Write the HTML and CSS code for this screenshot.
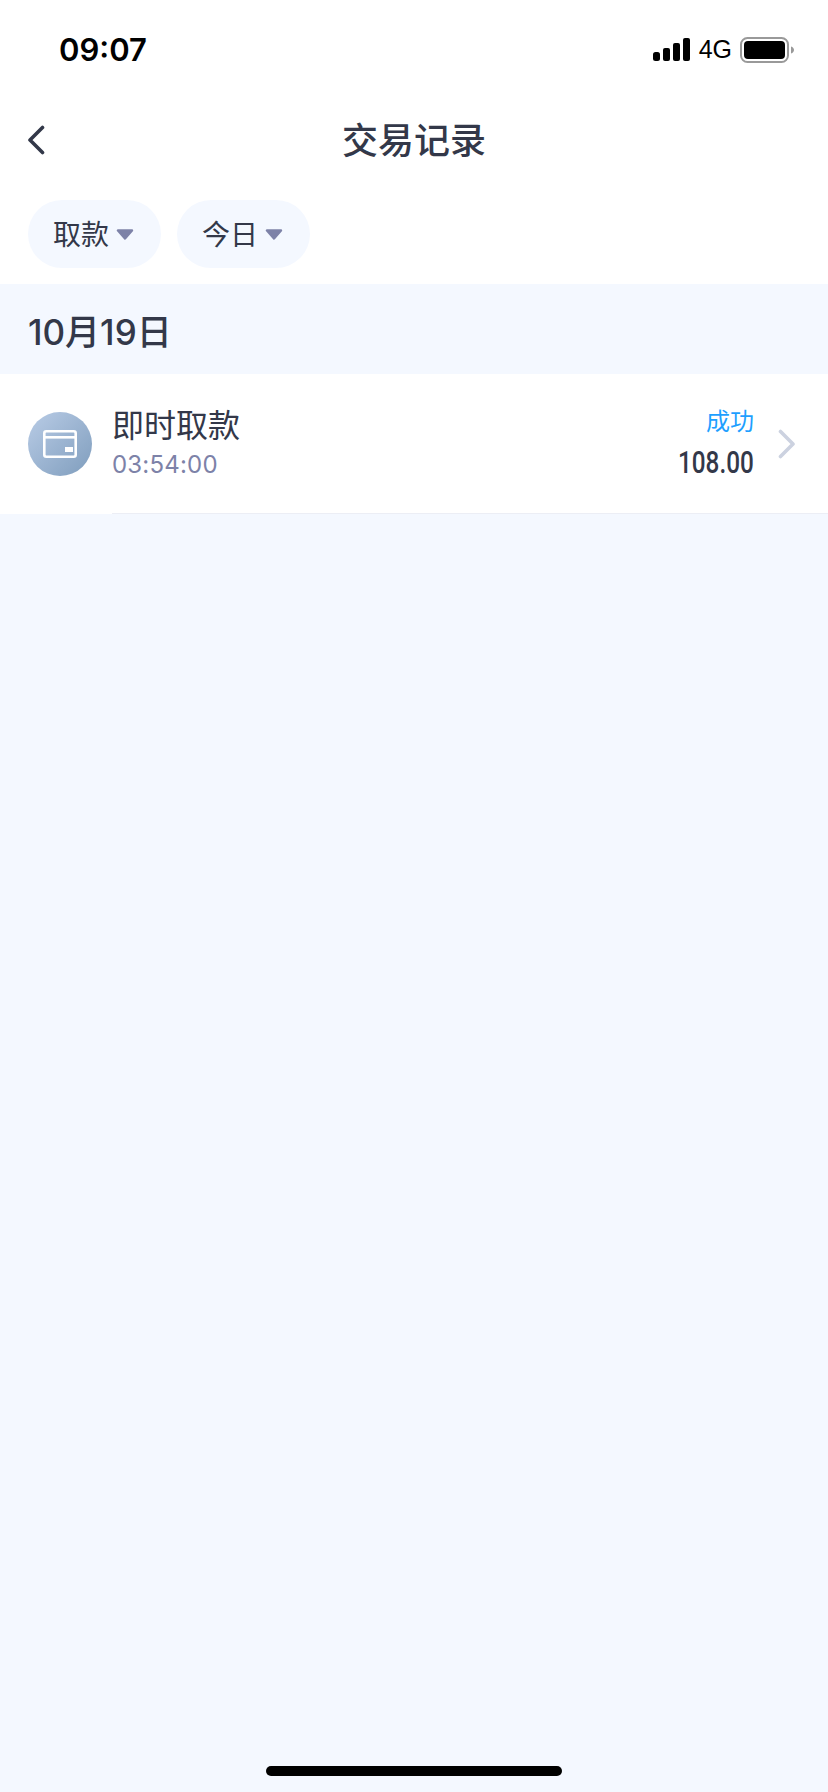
FILE: index.html
```html
<!DOCTYPE html>
<html lang="zh-CN">
<head>
	<meta charset="UTF-8">
	<meta name="viewport" content="width=device-width">
	<title>交易记录</title>
	<link rel="stylesheet" href="styles.css">
</head>
<body>
<div class="page">
	<div class="top">
		<div class="status">
			<span class="clock">09:07</span>
			<div class="status-right">
				<svg class="signal" width="37" height="23" viewBox="0 0 37 23">
					<rect x="0" y="14" width="7" height="9" rx="2.5" fill="#000"/>
					<rect x="10" y="10" width="7" height="13" rx="2" fill="#000"/>
					<rect x="20" y="5" width="7" height="18" rx="2" fill="#000"/>
					<rect x="30" y="0" width="7" height="23" rx="2" fill="#000"/>
				</svg>
				<span class="net">4G</span>
				<svg class="battery" width="54" height="26" viewBox="0 0 54 26">
					<rect x="1" y="1" width="47" height="24" rx="6.5" fill="none" stroke="#999" stroke-width="2"/>
					<rect x="4" y="4" width="41" height="18" rx="4" fill="#000"/>
					<path d="M51 9.5c2 .6 3 2 3 3.500s-1 2.900-3 3.500z" fill="#999"/>
				</svg>
			</div>
		</div>
		<div class="nav">
			<svg class="back" width="18" height="30" viewBox="0 0 18 30">
				<path d="M15.500 2.500L3 15l12.500 12.500" fill="none" stroke="#333849" stroke-width="3.600" stroke-linecap="round" stroke-linejoin="round"/>
			</svg>
			<h1 class="title">交易记录</h1>
		</div>
		<div class="filters">
			<div class="pill"><span class="pill-text">取款</span><svg class="caret" width="18" height="11" viewBox="0 0 18 11"><path d="M2 1.500h14L9 9.500z" fill="#7d82a8" stroke="#7d82a8" stroke-width="2.400" stroke-linejoin="round"/></svg></div>
			<div class="pill"><span class="pill-text">今日</span><svg class="caret" width="18" height="11" viewBox="0 0 18 11"><path d="M2 1.500h14L9 9.500z" fill="#7d82a8" stroke="#7d82a8" stroke-width="2.400" stroke-linejoin="round"/></svg></div>
		</div>
	</div>

	<div class="date">10月19日</div>

	<div class="row">
		<div class="avatar">
			<svg width="34" height="28" viewBox="0 0 34 28">
				<rect x="1.300" y="1.300" width="31.400" height="25.400" rx="2" fill="none" stroke="#fff" stroke-width="2.600"/>
				<rect x="1" y="6" width="32" height="2.600" fill="#fff"/>
				<rect x="22" y="17" width="8" height="5" fill="#fff"/>
			</svg>
		</div>
		<div class="row-main">
			<div class="row-name">即时取款</div>
			<div class="row-time">03:54:00</div>
		</div>
		<div class="row-side">
			<div class="row-state">成功</div>
			<div class="row-amount">108.00</div>
		</div>
		<svg class="more" width="18" height="30" viewBox="0 0 18 30">
			<path d="M2.500 2.500L15 15 2.500 27.500" fill="none" stroke="#ccd2e0" stroke-width="3.600" stroke-linecap="round" stroke-linejoin="round"/>
		</svg>
	</div>

	<div class="home-bar"></div>
</div>
</body>
</html>
```

FILE: styles.css
```css
html { height: 100%; }

body {
	margin: 0;
	height: 100%;
	font-family: "Noto Sans CJK SC", "Liberation Sans", sans-serif;
	color: #333849;
	background-color: #f4f8ff;
}

.page {
	display: flex;
	flex-direction: column;
	height: 100%;
}

.top {
	background-color: #fff;
	padding-bottom: 16px;
}

.status {
	display: flex;
	justify-content: space-between;
	align-items: center;
	height: 99px;
	padding: 0 34px 0 59px;
	box-sizing: border-box;
}

.clock {
	font-family: Inter, "Liberation Sans", sans-serif;
	font-size: 31px;
	font-weight: 600;
	color: #000;
}

.status-right {
	display: flex;
	align-items: center;
}

.net {
	font-family: "Liberation Sans", sans-serif;
	font-size: 25px;
	color: #000;
	margin: 0 8px 0 9px;
}

.nav {
	display: flex;
	align-items: center;
	justify-content: center;
	position: relative;
	height: 80px;
}

.back {
	position: absolute;
	left: 27px;
	top: 26px;
}

.title {
	margin: 0 0 2px;
	font-size: 36px;
	font-weight: 500;
}

.filters {
	display: flex;
	gap: 16px;
	padding: 21px 28px 0;
}

.pill {
	display: flex;
	align-items: center;
	height: 68px;
	padding: 0 27px 0 25px;
	border-radius: 34px;
	background-color: #f4f8ff;
	font-size: 28px;
}

.pill-text { margin-bottom: 2px; }

.caret {
	margin-left: 7px;
}

.date {
	display: flex;
	align-items: center;
	height: 90px;
	padding-left: 28px;
	font-family: Inter, "Noto Sans CJK SC", sans-serif;
	font-size: 35px;
	font-weight: 500;
}

.row {
	display: flex;
	align-items: center;
	height: 140px;
	padding: 0 32px 0 28px;
	background-color: #fff;
	position: relative;
}

.row::after {
	content: "";
	position: absolute;
	left: 112px;
	right: 0;
	bottom: 0;
	height: 1px;
	background-color: #eceef5;
}

.avatar {
	display: flex;
	align-items: center;
	justify-content: center;
	width: 64px;
	height: 64px;
	border-radius: 50%;
	background: linear-gradient(135deg, #b9cce6, #7f9dbd);
}

.row-main {
	flex: 1;
	margin-left: 20px;
	padding-bottom: 7px;
}

.row-name {
	font-size: 32px;
	line-height: 44px;
}

.row-time {
	margin-top: 5px;
	font-family: Inter, "Liberation Sans", sans-serif;
	font-size: 24px;
	line-height: 30px;
	color: #7d82a8;
	letter-spacing: 0.2px;
}

.row-side {
	padding-bottom: 2px;
	text-align: right;
}

.row-state {
	margin-bottom: 2px;
	font-size: 24px;
	line-height: 36px;
	color: #1e9fff;
}

/* no condensed face installed, so squeeze Roboto to the right width */
.row-amount {
	font-family: Roboto, sans-serif;
	font-size: 32px;
	font-weight: 500;
	line-height: 44px;
	transform: scaleX(0.76);
	transform-origin: right center;
}

.more { margin-left: 24px; }

.home-bar {
	width: 296px;
	height: 10px;
	margin: auto auto 16px;
	border-radius: 5px;
	background-color: #000;
}
```
